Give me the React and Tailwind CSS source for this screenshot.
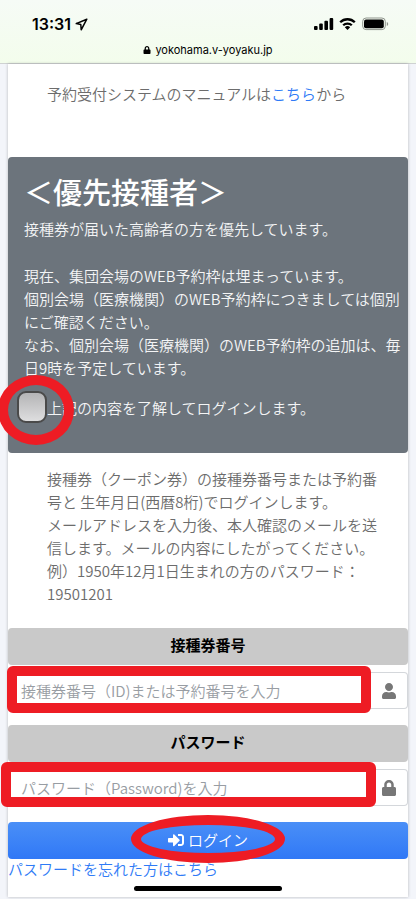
import React, { useState } from 'react';
import { FaLock, FaSignInAlt, FaUser } from 'react-icons/fa';

function StatusIcons() {
  return (
    <svg width="76" height="14" viewBox="0 0 76 14" aria-hidden="true">
      <rect x="0" y="9" width="3.6" height="4" rx="1" />
      <rect x="5.2" y="6.5" width="3.6" height="6.5" rx="1" />
      <rect x="10.4" y="3.8" width="3.6" height="9.2" rx="1" />
      <rect x="15.6" y="1" width="3.6" height="12" rx="1" />
      <g fill="none" stroke="#000" strokeWidth="2.3">
        <path d="M26.2 5.3a10.3 10.3 0 0 1 14.6 0" />
        <path d="M29.2 8.3a6.1 6.1 0 0 1 8.6 0" />
      </g>
      <path d="M33.5 13l-2.7-2.7a3.8 3.8 0 0 1 5.4 0z" />
      <rect x="48.7" y="1" width="22.6" height="11.6" rx="3.4" fill="none" stroke="#8f948c" />
      <rect x="50" y="2.4" width="19.8" height="8.8" rx="2" />
      <path d="M72.8 5v4c1.9-.6 1.9-3.4 0-4z" fill="#8f948c" />
    </svg>
  );
}

function PhoneHeader() {
  return (
    <header className="border-b border-[#cfd2d2] bg-gradient-to-b from-[#f6fbf6] to-[#f3fdec] pb-[3px] font-['Inter',sans-serif] text-black">
      <div className="flex items-center justify-between pl-8 pr-[26px] pt-3">
        <div className="flex items-center gap-1">
          <span className="text-base font-semibold leading-6">13:31</span>
          <svg width="13" height="13" viewBox="0 0 13 13" fill="none" stroke="#000" strokeWidth="1.5" strokeLinejoin="round" aria-hidden="true">
            <path d="M11.8 1.2L1.2 5.6l4.6.9.4 5.3z" />
          </svg>
        </div>
        <StatusIcons />
      </div>
      <div className="flex items-center justify-center gap-1 pt-1">
        <FaLock className="h-2 w-2" aria-hidden="true" />
        <span className="text-[11px] leading-5">yokohama.v-yoyaku.jp</span>
      </div>
    </header>
  );
}

function LoginField({ id, label, placeholder, type, icon, mark }) {
  return (
    <div className="mb-4">
      <label
        htmlFor={id}
        className="mb-[7px] block rounded bg-[#c9c9c9] pt-[5px] pb-[9px] text-center font-bold text-black"
      >
        {label}
      </label>
      <div className="relative flex">
        <input
          id={id}
          type={type}
          placeholder={placeholder}
          className="h-[37px] min-w-0 flex-1 rounded-l border border-r-0 border-[#d4d7db] bg-white pl-3 font-[350] placeholder:text-[#989da3]"
        />
        <span className="flex w-[37px] items-center justify-center rounded-r border border-l-0 border-[#d4d7db] text-[#777]">
          {icon}
        </span>
        <span className={`pointer-events-none absolute rounded-md border-[10px] border-[#ee1c24] ${mark}`} />
      </div>
    </div>
  );
}

export default function App() {
  const [agreed, setAgreed] = useState(false);

  return (
    <div className="relative bg-[#f3f5fa] font-['Noto_Sans_CJK_JP',sans-serif] text-[15px] leading-[23px] text-[#6c6c6c]">
      <PhoneHeader />
      <main className="px-2 pb-0.5">
        <div className="bg-white pb-[17px] shadow-[0_0_3px_rgba(0,0,0,0.25)]">
          <p className="pl-[39px] pt-[18px] font-[350]">
            予約受付システムのマニュアルは
            <a href="#manual" className="text-[#2f7bf6]">こちら</a>
            から
          </p>

          <section className="mt-[52px] rounded bg-[#6c747c] px-4 pb-[30px] pt-3 font-[350] text-[#f4f5f6]">
            <h1 className="text-[29px] leading-[44px] font-medium text-white">＜優先接種者＞</h1>
            <p className="mt-1">接種券が届いた高齢者の方を優先しています。</p>
            <p className="mt-6 whitespace-nowrap">
              現在、集団会場のWEB予約枠は埋まっています。
              <br />
              個別会場（医療機関）のWEB予約枠につきましては個別
              <br />
              にご確認ください。
              <br />
              なお、個別会場（医療機関）のWEB予約枠の追加は、毎
              <br />
              日9時を予定しています。
            </p>
            <div className="relative -ml-2 mt-3 flex items-center">
              <input
                id="agree"
                type="checkbox"
                checked={agreed}
                onChange={(e) => setAgreed(e.target.checked)}
                className="ml-px h-8 w-[30px] appearance-none rounded-[9px] border-2 border-[#4a4a4a] bg-gradient-to-b from-[#b4b4b6] to-[#dededf] checked:from-[#2f7bf6] checked:to-[#2f7bf6]"
              />
              <label htmlFor="agree">上記の内容を了解してログインします。</label>
              <span className="pointer-events-none absolute -left-[18px] -top-4 h-[70px] w-[76px] rounded-[50%] border-[10px] border-[#ee1c24]" />
            </div>
          </section>

          <p className="whitespace-nowrap pl-[39px] pt-[14px] font-[350]">
            接種券（クーポン券）の接種券番号または予約番
            <br />
            号と 生年月日(西暦8桁)でログインします。
            <br />
            メールアドレスを入力後、本人確認のメールを送
            <br />
            信します。メールの内容にしたがってください。
            <br />
            例）1950年12月1日生まれの方のパスワード：
            <br />
            19501201
          </p>

          <form className="pt-[23px]" onSubmit={(e) => e.preventDefault()}>
            <LoginField
              id="ticket"
              type="text"
              label="接種券番号"
              placeholder="接種券番号（ID)または予約番号を入力"
              icon={<FaUser className="h-4 w-4" />}
              mark="-left-px -top-1.5 -bottom-1 right-[37px]"
            />
            <LoginField
              id="password"
              type="password"
              label="パスワード"
              placeholder="パスワード（Password)を入力"
              icon={<FaLock className="h-4 w-4" />}
              mark="-left-[7px] -top-[7px] -bottom-px right-8"
            />
            <button
              type="submit"
              className="relative flex h-[37px] w-full items-center justify-center gap-1 rounded bg-gradient-to-b from-[#4a8ff7] to-[#3078f6] pb-0.5 font-[350] text-white"
            >
              <FaSignInAlt className="h-4 w-4" />
              ログイン
              <span className="pointer-events-none absolute -top-[7px] left-1/2 h-12 w-[154px] -translate-x-1/2 rounded-[50%] border-[10px] border-[#ee1c24]" />
            </button>
          </form>
          <a href="#forgot" className="-mt-0.5 block font-[350] text-[#2f7bf6]">パスワードを忘れた方はこちら</a>
        </div>
      </main>
      <div className="absolute bottom-2 left-1/2 h-[5px] w-[148px] -translate-x-1/2 rounded-full bg-black" />
    </div>
  );
}
